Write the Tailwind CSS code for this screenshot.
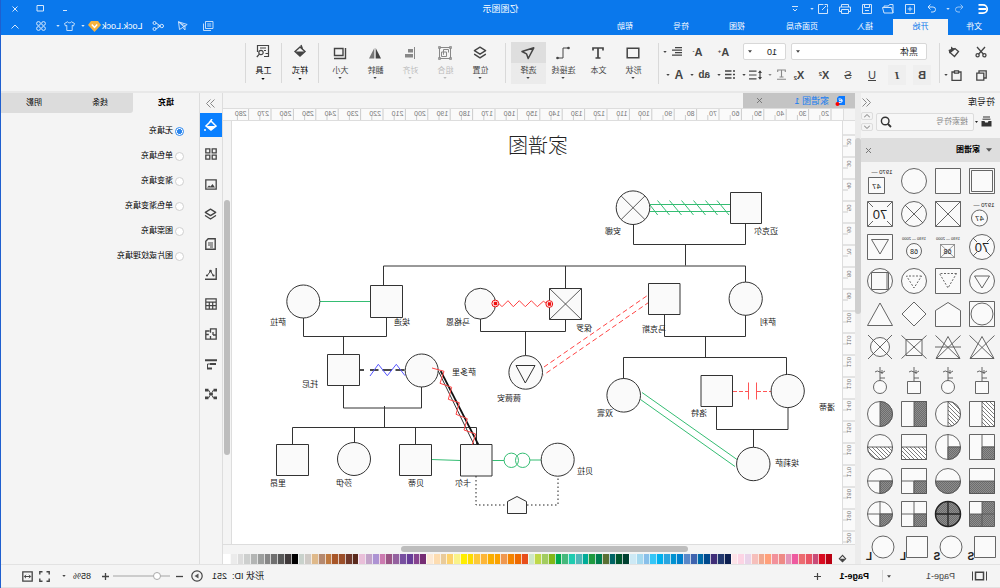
<!DOCTYPE html>
<html>
<head>
<meta charset="utf-8">
<title>亿图图示</title>
<script src="https://cdn.jsdelivr.net/npm/@tailwindcss/browser@4"></script>
</head>
<body class="bg-white">
<svg class="absolute h-0 w-0" aria-hidden="true">
  <defs>
    <symbol id="caret" viewBox="0 0 5 3"><path d="M0 0h5L2.5 3z" fill="currentColor"/></symbol>
    <symbol id="layers" viewBox="0 0 14 14"><path d="M7 1.2 12.6 4.7 7 8.2 1.4 4.7zM1.6 8.3 7 11.9l5.4-3.6" fill="none" stroke="currentColor" stroke-width="1.4" stroke-linejoin="round" stroke-linecap="round"/></symbol>
    <pattern id="dark" width="2" height="2" patternUnits="userSpaceOnUse"><rect width="2" height="2" fill="#8d8d8d"/><path d="M0 0h1v1H0zM1 1h1v1H1z" fill="#6d6d6d"/></pattern>
    <pattern id="hatch" width="4" height="4" patternUnits="userSpaceOnUse"><rect width="4" height="4" fill="#fff"/><path d="M-1 1 1-1M0 4 4 0M3 5 5 3" stroke="#444" stroke-width=".7"/></pattern>
  </defs>
</svg>

<div class="flex min-h-screen -scale-x-100 flex-col border-r border-[#1f5fcf] bg-[#f4f4f4] font-['Liberation_Sans','Noto_Sans_CJK_SC',sans-serif] text-[8px] leading-3 text-[#222]">

  <!-- title bar and menu -->
  <header class="relative flex h-[35px] bg-[#0a78ec] text-white">
    <div class="flex w-1/2 flex-col justify-between">
      <div class="flex h-[17px] items-center pl-[11px] text-[#cfe4fb]">
        <svg class="w-[12px] h-[12px] text-white" viewBox="0 0 12 12"><path d="M10.5 1.8H6A4.2 4.2 0 0 0 6 10.2h4.5M3 6h7.5" fill="none" stroke="currentColor" stroke-width="1.8"/></svg>
        <button class="ml-[12px]" aria-label="撤销"><svg class="w-[11px] h-[11px] opacity-70" viewBox="0 0 11 11"><path d="M4.5 1.5 2 4l2.500 2.500M2.200 4H7a2.400 2.400 0 0 1 0 5H5" fill="none" stroke="currentColor"/></svg></button>
        <svg class="ml-[4px] h-[2px] w-[4px]"><use href="#caret"/></svg>
        <button class="ml-[9px]" aria-label="重做"><svg class="w-[11px] h-[11px]" viewBox="0 0 11 11"><path d="M6.500 1.500 9 4 6.500 6.500M8.800 4H4a2.400 2.400 0 0 0 0 5h2" fill="none" stroke="currentColor"/></svg></button>
        <button class="ml-[11px]" aria-label="新建"><svg class="w-[10px] h-[10px]" viewBox="0 0 10 10"><path d="M.5.5h9v9h-9zM5 2.700v4.600M2.700 5h4.600" fill="none" stroke="currentColor"/></svg></button>
        <button class="ml-[11px]" aria-label="打开"><svg class="w-[12px] h-[10px]" viewBox="0 0 12 10"><path d="M1 9V.5h3.500l1 1.500h4.500v1.500M1 9l1.500-5.500h9L10 9z" fill="none" stroke="currentColor"/></svg></button>
        <button class="ml-[10px]" aria-label="保存"><svg class="w-[10px] h-[10px]" viewBox="0 0 10 10"><path d="M.5.5h9v9h-9zM2.500.5v3h5v-3M3 6.500h4" fill="none" stroke="currentColor"/></svg></button>
        <button class="ml-[11px]" aria-label="打印"><svg class="w-[12px] h-[10px]" viewBox="0 0 12 10"><path d="M2.500 3V.5h7V3M2.500 7.500h-2V3h11v4.500h-2M2.500 5.500h7v4h-7z" fill="none" stroke="currentColor"/></svg></button>
        <button class="ml-[11px]" aria-label="导出"><svg class="w-[10px] h-[10px]" viewBox="0 0 10 10"><path d="M4.500.5H9.500v9h-9V4.500M2 2l4 4M.5 3.500V.5h3" fill="none" stroke="currentColor"/></svg></button>
        <svg class="ml-[4px] h-[2px] w-[4px]"><use href="#caret"/></svg>
        <svg class="ml-[12px] w-[6px] h-[6px]" viewBox="0 0 6 6"><path d="M0 .5h6M1 3l2 2 2-2" fill="none" stroke="currentColor"/></svg>
      </div>
      <nav class="flex h-[16px]">
        <button class="w-[52px]">文件</button>
        <button class="w-[55px] bg-[#f4f4f4] text-[#0a78ec]">开始</button>
        <button class="w-[56px]">插入</button>
        <button class="w-[70px]">页面布局</button>
        <button class="w-[60px]">视图</button>
        <button class="w-[52px]">符号</button>
        <button class="w-[60px]">帮助</button>
      </nav>
    </div>
    <h1 class="absolute inset-x-0 top-[3px] text-center text-[9px]">亿图图示</h1>
    <div class="ml-auto flex flex-col items-end justify-between text-[#d6e8fc]">
      <div class="flex h-[17px] items-center gap-[18px] pr-[11px]">
        <button aria-label="最小化"><svg class="w-[6px] h-[6px]" viewBox="0 0 6 6"><path d="M1 4.500h4" stroke="currentColor"/></svg></button>
        <button aria-label="最大化"><svg class="w-[8px] h-[7px]" viewBox="0 0 8 7"><path d="M.5.5h6.500v5.500H.5z" fill="none" stroke="currentColor"/></svg></button>
        <button aria-label="关闭"><svg class="w-[6px] h-[6px]" viewBox="0 0 6 6"><path d="m.5.5 5 5m0-5-5 5" stroke="currentColor"/></svg></button>
      </div>
      <div class="flex h-[18px] items-center pr-[10px]">
        <button aria-label="评论"><svg class="w-[11px] h-[10px]" viewBox="0 0 11 10"><path d="M1 .5h7.500v7H1zM2.800 3h4M2.800 5h4M3 9.500h7.500V2.500" fill="none" stroke="currentColor" stroke-width=".9"/></svg></button>
        <button class="ml-[15px]" aria-label="发送"><svg class="w-[11px] h-[10px]" viewBox="0 0 11 10"><path d="M9.500.8.8 3.500 3 5v4l2-2.300M9.500.8 8.500 8.500 3 5zM9.500.8 4 6" fill="none" stroke="currentColor" stroke-width=".9"/></svg></button>
        <button class="ml-[13px]" aria-label="分享"><svg class="w-[12px] h-[10px]" viewBox="0 0 12 10"><path d="M3.500 5h3M3.500 5l4.500-3M3.500 5 8 8" stroke="currentColor" fill="none"/><circle cx="2.200" cy="5" r="1.700" fill="#0a78ec" stroke="currentColor"/><circle cx="9.500" cy="2" r="1.500" fill="#0a78ec" stroke="currentColor"/><circle cx="9.500" cy="8" r="1.500" fill="#0a78ec" stroke="currentColor"/></svg></button>
        <button class="ml-[9px] flex items-center text-[9px] text-white">Lock.Lock<svg class="ml-px w-[13px] h-[11px]" viewBox="0 0 13 11"><path d="M3 0h7l3 4-6.500 7L0 4z" fill="#f6b340"/><path d="M3.800 3.500 6.500 6.500 9.200 3.500" fill="none" stroke="#fff" stroke-width="1.500"/></svg></button>
        <svg class="ml-[3px] h-[2px] w-[4px]"><use href="#caret"/></svg>
        <button class="ml-[6px]" aria-label="皮肤"><svg class="w-[11px] h-[10px]" viewBox="0 0 11 10"><path d="M3.500.8.5 2.500l1 2.500 1.300-.6V9.500h5.400V4.400l1.300.6 1-2.500L7.500.8c-.8 1.300-3.200 1.300-4 0z" fill="none" stroke="currentColor" stroke-width=".9"/></svg></button>
        <svg class="ml-[4px] h-[2px] w-[4px]"><use href="#caret"/></svg>
        <button class="ml-[10px]" aria-label="应用"><svg class="w-[10px] h-[10px]" viewBox="0 0 10 10" fill="none" stroke="currentColor"><circle cx="2.500" cy="2.500" r="1.900"/><circle cx="7.500" cy="2.500" r="1.900"/><circle cx="2.500" cy="7.500" r="1.900"/><circle cx="7.500" cy="7.500" r="1.900"/></svg></button>
        <button class="ml-[17px]" aria-label="收起"><svg class="w-[8px] h-[5px]" viewBox="0 0 8 5"><path d="M.5 4.500 4 1l3.500 3.500" fill="none" stroke="currentColor"/></svg></button>
      </div>
    </div>
  </header>

  <!-- ribbon -->
  <div class="flex h-[58px] items-center border-b-2 border-[#e8e8e8] text-[#444]">
    <div class="grid h-[40px] w-[61px] grid-cols-2 content-center items-center justify-items-center gap-y-[12px] border-r border-[#d9d9d9] pl-[5px]">
      <button aria-label="剪切"><svg class="w-[12px] h-[12px]" viewBox="0 0 12 12" fill="none" stroke="currentColor" stroke-width="1.300"><path d="M2 1l6.500 7.200M10 1 3.500 8.200"/><circle cx="2.600" cy="9.300" r="1.600"/><circle cx="9.400" cy="9.300" r="1.600"/></svg></button>
      <button aria-label="格式刷"><svg class="w-[12px] h-[12px]" viewBox="0 0 12 12"><path d="M1.500 5.500 5 2.500 10 6.500 5.500 10.500z" fill="none" stroke="currentColor" stroke-width="1.300"/><path d="m4.500 2.500 6 5L11.500 4 9 3V.5L7 2z" fill="currentColor"/></svg></button>
      <button aria-label="复制"><svg class="w-[11px] h-[11px]" viewBox="0 0 11 11" fill="none" stroke="currentColor" stroke-width="1.300"><path d="M8 3V.800H.8V8H3M3.200 3.200h7v7h-7z"/></svg></button>
      <button class="flex items-center gap-[3px] pl-px" aria-label="粘贴"><svg class="w-[11px] h-[11px]" viewBox="0 0 11 11" fill="none" stroke="currentColor" stroke-width="1.300"><path d="M3.500 2H1v8.300h9V2H7.500M3.500.8h4v2.400h-4z"/></svg><svg class="h-[2px] w-[4px]"><use href="#caret"/></svg></button>
    </div>
    <div class="flex w-[281px] flex-col gap-[5px] border-r border-[#d9d9d9] pl-[12px]">
      <div class="flex h-[18px] items-center">
        <div class="relative w-[136px]">
          <select aria-label="字体" class="h-[17px] w-full appearance-none rounded-[2px] border border-[#d8d8d8] bg-white pl-[8px] text-[9px] text-[#222]"><option>黑体</option></select>
          <svg class="absolute top-[7px] right-[5px] h-[3px] w-[4px]"><use href="#caret"/></svg>
        </div>
        <div class="relative ml-[5px] w-[43px]">
          <select aria-label="字号" class="h-[17px] w-full appearance-none rounded-[2px] border border-[#d8d8d8] bg-white pl-[8px] text-[9px] text-[#222]"><option>10</option></select>
          <svg class="absolute top-[7px] right-[5px] h-[3px] w-[4px]"><use href="#caret"/></svg>
        </div>
        <button class="ml-[13px] w-[13px] text-[11px] font-bold">A<sup class="text-[6px]">+</sup></button>
        <button class="ml-[13px] w-[13px] text-[11px] font-bold">A<sup class="text-[6px]">-</sup></button>
        <button class="ml-[9px] flex items-center gap-[5px]" aria-label="对齐"><svg class="w-[10px] h-[9px]" viewBox="0 0 10 9"><path d="M0 .7h7M0 3.200h10M0 5.700h7M0 8.200h10" stroke="currentColor" stroke-width="1.300"/></svg><svg class="h-[2px] w-[4px]"><use href="#caret"/></svg></button>
      </div>
      <div class="flex h-[18px] items-center text-[11px]">
        <button class="w-[18px] bg-[#efefef] py-1 font-bold -ml-[4px]">B</button>
        <button class="ml-[7px] w-[18px] bg-[#efefef] py-1 font-['Liberation_Serif'] font-bold italic">I</button>
        <button class="ml-[7px] w-[18px] underline">U</button>
        <button class="ml-[6px] w-[18px] line-through">S</button>
        <button class="ml-[6px] w-[18px] font-bold">X<sup class="text-[6px]">2</sup></button>
        <button class="ml-[7px] w-[18px] font-bold">X<sub class="text-[6px]">2</sub></button>
        <button class="ml-[4px] flex items-center gap-[5px] text-[#888]" aria-label="清除格式"><svg class="w-[9px] h-[11px]" viewBox="0 0 9 11"><path d="M.7 3V1h7.600v2M4.500 1v7M2.500 8h4M0 10.300h9" fill="none" stroke="currentColor" stroke-width="1.100"/></svg><svg class="h-[2px] w-[4px]"><use href="#caret"/></svg></button>
        <button class="ml-[6px] flex items-center gap-[3px]" aria-label="行距"><svg class="w-[13px] h-[10px]" viewBox="0 0 13 10"><path d="M5.500 1.200H13M5.500 5H13M5.500 8.800H13M2 1v8" stroke="currentColor" stroke-width="1.200"/><path d="M0 3 2 .3 4 3zM0 7l2 2.700L4 7z" fill="currentColor"/></svg><svg class="h-[2px] w-[4px]"><use href="#caret"/></svg></button>
        <button class="ml-[7px] flex items-center gap-[4px]" aria-label="项目符号"><svg class="w-[10px] h-[9px]" viewBox="0 0 10 9"><path d="M0 1h2M3.500 1H10M0 4.500h2M3.500 4.500H10M0 8h2M3.500 8H10" stroke="currentColor" stroke-width="1.300"/></svg><svg class="h-[2px] w-[4px]"><use href="#caret"/></svg></button>
        <button class="ml-[7px] flex items-center gap-[4px] text-[10px] font-bold">ab<svg class="h-[2px] w-[4px]"><use href="#caret"/></svg></button>
        <button class="ml-[7px] flex items-center gap-[5px] text-[12px] font-bold">A<svg class="h-[2px] w-[4px]"><use href="#caret"/></svg></button>
      </div>
    </div>

    <div class="flex h-[40px] w-[153px] items-center border-r border-[#d9d9d9] pl-[7px]">
      <button class="flex h-[42px] w-[35px] flex-col items-center leading-[10px]"><svg class="mt-[4px] h-[14px] w-[14px]" viewBox="0 0 14 14"><path d="M1.200 2.200h11.600v9.600H1.200z" fill="none" stroke="currentColor" stroke-width="1.500"/></svg><span class="mt-[6px]">形状</span><svg class="mt-px h-[2px] w-[4px]"><use href="#caret"/></svg></button>
      <button class="flex h-[42px] w-[35px] flex-col items-center leading-[10px]"><svg class="mt-[4px] h-[14px] w-[14px]" viewBox="0 0 14 14"><path d="M2 4.500V2h10v2.500M7 2v10M4.500 12h5" fill="none" stroke="currentColor" stroke-width="1.700"/></svg><span class="mt-[6px]">文本</span></button>
      <button class="flex h-[42px] w-[35px] flex-col items-center leading-[10px]"><svg class="mt-[4px] h-[14px] w-[14px]" viewBox="0 0 14 14"><path d="M1.500 2h5.500v10h5.500" fill="none" stroke="currentColor"/><circle cx="1.500" cy="2" r="1.300" fill="currentColor"/><circle cx="12.500" cy="12" r="1.300" fill="currentColor"/></svg><span class="mt-[6px]">连接线</span><svg class="mt-px h-[2px] w-[4px]"><use href="#caret"/></svg></button>
      <button class="flex h-[42px] w-[35px] flex-col items-center bg-linear-to-b from-[#dedede] from-50% to-[#ebebeb] to-50% leading-[10px]"><svg class="mt-[4px] h-[14px] w-[14px]" viewBox="0 0 14 14"><path d="M1.200 1.800 13 5.500 8.500 7.800 6.800 12.500z" fill="none" stroke="currentColor" stroke-width="1.500" stroke-linejoin="round"/></svg><span class="mt-[6px]">选择</span><svg class="mt-px h-[2px] w-[4px]"><use href="#caret"/></svg></button>
    </div>
    <div class="flex h-[40px] w-[187px] items-center border-r border-[#d9d9d9] pl-[7px]">
      <button class="flex h-[42px] w-[35px] flex-col items-center leading-[10px]"><svg class="mt-[4px] h-[14px] w-[14px]"><use href="#layers"/></svg><span class="mt-[6px]">位置</span><svg class="mt-px h-[2px] w-[4px]"><use href="#caret"/></svg></button>
      <button class="flex h-[42px] w-[35px] flex-col items-center leading-[10px] text-[#bbb]"><svg class="mt-[4px] h-[14px] w-[14px] text-[#888]" viewBox="0 0 14 14" fill="none" stroke="currentColor"><path d="M1.500 1.500h11v11h-11zM3.500 6.500v-3h5v5H8M5.500 6h5v4.500h-5z"/><path d="M.5.500h2v2h-2zM11.500.5h2v2h-2zM.5 11.500h2v2h-2zM11.500 11.500h2v2h-2z" stroke-width=".8"/></svg><span class="mt-[6px]">组合</span><svg class="mt-px h-[2px] w-[4px]"><use href="#caret"/></svg></button>
      <button class="flex h-[42px] w-[35px] flex-col items-center leading-[10px] text-[#bbb]"><svg class="mt-[4px] h-[14px] w-[14px] text-[#888]" viewBox="0 0 14 14" fill="currentColor"><path d="M2 1h1v12H2zM4 3h5v3.500H4zM4 8h8v3.500H4z"/></svg><span class="mt-[6px]">对齐</span><svg class="mt-px h-[2px] w-[4px]"><use href="#caret"/></svg></button>
      <button class="flex h-[42px] w-[35px] flex-col items-center leading-[10px]"><svg class="mt-[4px] h-[14px] w-[14px]" viewBox="0 0 14 14"><path d="M6.300 2v10.500H1z" fill="currentColor"/><path d="M7.700 2v10.500H13z" fill="#777"/></svg><span class="mt-[6px]">翻转</span><svg class="mt-px h-[2px] w-[4px]"><use href="#caret"/></svg></button>
      <button class="flex h-[42px] w-[35px] flex-col items-center leading-[10px]"><svg class="mt-[4px] h-[14px] w-[14px]" viewBox="0 0 14 14" fill="none" stroke="currentColor" stroke-width="1.400"><path d="M4 2.500h8.500v7H4zM1.500 2v10.500H13"/></svg><span class="mt-[6px]">大小</span><svg class="mt-px h-[2px] w-[4px]"><use href="#caret"/></svg></button>
    </div>
    <div class="flex h-[40px] w-[37px] items-center justify-center border-r border-[#d9d9d9]">
      <button class="flex h-[42px] w-[35px] flex-col items-center leading-[10px] text-black"><svg class="mt-[2px] h-[14px] w-[14px]" viewBox="0 0 14 14"><path d="M6 1 4.500 5M7 3l5 4.500-5 4.500-5-4.500z" fill="none" stroke="#444" stroke-width="1.400"/><path d="M2.500 7.500h9L7 12z" fill="#444"/></svg><span class="mt-[8px]">样式</span><svg class="mt-[2px] h-[2px] w-[4px]"><use href="#caret"/></svg></button>
    </div>
    <div class="flex h-[40px] w-[36px] items-center justify-center border-r border-[#d9d9d9]">
      <button class="flex h-[42px] w-[35px] flex-col items-center leading-[10px] text-black"><svg class="mt-[2px] h-[14px] w-[14px] text-[#444]" viewBox="0 0 14 14" fill="none" stroke="currentColor" stroke-width="1.200"><path d="M6 12.500H1.500v-11h11V8M4 4h6M4 6.500h2M1.500 9.500h3"/><circle cx="9" cy="8.500" r="2.200"/><path d="m10.600 10.200 2.600 2.800"/></svg><span class="mt-[8px]">工具</span><svg class="mt-[2px] h-[2px] w-[4px]"><use href="#caret"/></svg></button>
    </div>
  </div>

  <main class="flex flex-1">
    <!-- symbol library -->
    <aside class="flex w-[139px] flex-col">
      <div class="flex h-[18px] items-center justify-between pr-px pl-[5px] text-[9px]"><h2>符号库</h2><button aria-label="收起符号库"><svg class="h-[9px] w-[9px] text-[#888]" viewBox="0 0 9 9"><path d="M4.500.5.500 4.500l4 4M8.500.5l-4 4 4 4" fill="none" stroke="currentColor"/></svg></button></div>
      <div class="mb-[6px] flex h-[21px] items-center pl-[8px]">
        <button class="flex items-center gap-[3px]" aria-label="符号分类"><svg class="h-[11px] w-[11px] text-[#333]" viewBox="0 0 11 11"><path d="M2 1h7M1.500 3.200h8" stroke="currentColor"/><path d="M.5 5h3l.7 1.500h2.600L7.500 5h3v5.500H.5z" fill="currentColor"/></svg><svg class="h-[2px] w-[3px]"><use href="#caret"/></svg></button>
        <div class="relative ml-px">
          <input aria-label="搜索符号" placeholder="搜索符号" class="h-[18px] w-[98px] rounded-[2px] border border-[#dcdcdc] bg-[#f7f7f7] pl-[5px] text-[8px] placeholder:text-[#888]">
          <svg class="absolute top-[3px] right-[4px] h-[12px] w-[12px] text-[#333]" viewBox="0 0 12 12"><path d="m4 8-3 3" stroke="currentColor" stroke-width="1.800"/><circle cx="6.800" cy="5" r="3.800" fill="none" stroke="currentColor" stroke-width="1.400"/></svg>
        </div>
        <div class="ml-[3px] flex flex-col gap-[3px]">
          <button class="flex h-[8px] w-[12px] items-center justify-center rounded-[2px] border border-[#ddd]" aria-label="上"><svg class="h-[4px] w-[6px]" viewBox="0 0 6 4"><path d="m0 3.500 3-3 3 3" fill="none" stroke="#777"/></svg></button>
          <button class="flex h-[8px] w-[12px] items-center justify-center rounded-[2px] border border-[#ddd]" aria-label="下"><svg class="h-[4px] w-[6px]" viewBox="0 0 6 4"><path d="m0 .5 3 3 3-3" fill="none" stroke="#777"/></svg></button>
        </div>
      </div>
      <div class="flex h-[24px] items-center bg-[#dedede] pr-[5px] pl-[8px] text-[8px] font-bold text-black"><svg class="mr-[6px] h-[4px] w-[6px] text-[#555]"><use href="#caret"/></svg>家谱图<button class="ml-auto" aria-label="关闭家谱图"><svg class="h-[5px] w-[5px]" viewBox="0 0 5 5"><path d="m0 0 5 5m0-5-5 5" stroke="#777"/></svg></button></div>
      <div id="library" class="grid flex-1 grid-cols-4 items-center justify-items-center pt-[2px] pr-[2px] pl-px"></div>
    </aside>
    <div class="w-[6px] bg-[#ececec] pt-[45px]"><div class="h-[176px] rounded-full bg-[#cfcfcf]"></div></div>

    <!-- drawing area -->
    <section class="flex min-w-0 flex-1 flex-col">
      <div class="flex h-[15px]"><button class="flex w-[112px] items-center bg-[#c4c4c4] pl-[9px] text-[9px] text-[#1a7df0]"><svg class="mr-[6px] h-[10px] w-[11px]" viewBox="0 0 11 10"><path d="M1 0h6l2 2v7H1z" fill="#0a78ff"/><path d="M7.500 3H5.500a1.700 1.700 0 0 0 0 3.500h2M4 4.700h3" stroke="#fff" fill="none"/><circle cx="8.500" cy="8" r="2" fill="#f00"/></svg>家谱图 1<svg class="ml-auto mr-[14px] h-[5px] w-[5px]" viewBox="0 0 5 5"><path d="m0 0 5 5m0-5-5 5" stroke="#666" stroke-width=".8"/></svg></button></div>
      <div class="flex h-[13px] border-t border-b border-[#ddd]"><div class="w-[12px] border-r border-[#ddd]"></div><div class="min-w-0 flex-1 overflow-hidden bg-[#fafafa]"><svg id="hruler" class="h-[11px] w-[616px]"></svg></div></div>
      <div class="flex min-h-0 flex-1">
        <div class="w-[13px] overflow-hidden border-r border-[#ddd] bg-[#fafafa]"><svg id="vruler" class="h-[423px] w-[12px]"></svg></div>
        <div class="min-w-0 flex-1 overflow-hidden bg-white">
          <svg class="h-[422px] w-[610px]" viewBox="158 121 610 422" fill="none" stroke="#333" stroke-width="1">
            <g transform="matrix(-1 0 0 1 1000 0)">
              <path d="M633.500 224v20.500h112V224M685.500 244.500v21M383.500 285v-19h362v17M565.500 266v22M664.500 315v21.500h81V315M705.500 336.500v21M623.500 379v-21.500h163V375M716.500 407v22.500h71.500V407M753.500 429.500V447M480.500 319v12.500h85V320M525.500 331.500V356M303.500 318v18.500h83V317M343.500 336.500V355M343.500 386v22h78v-21M384.500 406v21.500M292.500 445v-17.500h184V445M354.500 427.500V443M415.500 427.500V445"/>
              <path d="M650 204.500h80M650 211.500h80M650 205l7.700 10M657.500 200.500l12 14.500M669.500 200.500l12 14.500M681.500 200.500l12 14.500M693.500 200.500l12 14.500M705.500 200.500l12 14.500M717 200.500l12 14.500M642 392.500l95 67M640.500 399.500l94.500 67M320 301.500h50M431.500 459.500l29 1M492.500 460.500H504M530 460h11" stroke="#35bd73"/>
              <g stroke="#35bd73"><circle cx="511.300" cy="460.300" r="7.200"/><circle cx="522.700" cy="460.300" r="7.200"/></g>
              <path d="M646.700 296 544 367M649.300 302 543.500 375" stroke="#f44" stroke-dasharray="5 3"/>
              <path d="M733 391.500h15M757 391.500h15" stroke="#f55" stroke-dasharray="4 2"/>
              <path d="M748.500 382.500v17M756.500 382.500v17" stroke="#f55"/>
              <g fill="#fafafa">
                <path d="M730.500 192.500h31v31h-31zM648.500 283.500h31.500v31h-31.500zM701 375.500h31.500v31H701zM549.500 288.500h32v31h-32zM370.500 285.500h32v32h-32zM327.500 354.500h32v31h-32zM276.500 444.500h32v31h-32zM399.500 444.500h32v31h-32zM460.500 444.500h31.500v31.500h-31.500zM507.500 501.500l9.500-5 9.500 5v12h-19z"/>
                <circle cx="633" cy="207.700" r="16.800"/><circle cx="745.700" cy="298.700" r="16.600"/><circle cx="623.700" cy="395.300" r="16.800"/><circle cx="787.700" cy="391" r="16.600"/><circle cx="753.300" cy="464" r="16.700"/><circle cx="480.300" cy="303.700" r="15.400"/><circle cx="525.700" cy="372.400" r="16.800"/><circle cx="303.300" cy="301.500" r="16.500"/><circle cx="421.700" cy="370.500" r="16.500"/><circle cx="354" cy="459" r="16.500"/><circle cx="557.700" cy="459.700" r="16.500"/>
                <path d="M516 365.500h19l-9.700 17.500z"/>
              </g>
              <path d="m621.200 196 23.700 23.500m0-23.500-23.700 23.500M549.500 288.500l32 31m0-31-32 31" stroke-width=".8"/>
              <path d="m498.700 303.300 3.300 3.400 6-6 5.300 6 6-6 6 6 6-6 6 6 6-5.400 3.300 2" stroke="#f44"/>
              <g stroke="#e11"><circle cx="495.300" cy="303.500" r="3.400" fill="#fff"/><circle cx="549.300" cy="304" r="3.400" fill="#fff"/></g>
              <path d="M494 302h3v3h-3zM548 302.500h3v3h-3z" fill="#e11" stroke="#e11" stroke-width=".5"/>
              <path d="M360 370h4M370 370h8.500M382.500 370h9.500M395.500 370h9" stroke="#111" stroke-width="1.400"/>
              <path d="m370 376 8.300-11.700 9 11.400 9-11.400 8.700 11.400" stroke="#55f"/>
              <path d="m438.300 371 35.700 73.500"/>
              <path d="m440.700 371 37.600 73.500" stroke="#111" stroke-width="1.700"/>
              <path d="m432 368 12 3.300-4 12 11.700 4-3.400 12 11 3.400-3.300 11.600 11.300 4.400L464 430l11.700 4-3.400 10.500" stroke="#f44"/>
              <path d="M476 476v29h31M527 505h31v-29" stroke="#222" stroke-dasharray="1.500 2.500"/>
            </g>
            <g fill="#222" stroke="none" text-anchor="middle" class="text-[8px]">
              <text x="234" y="234">迈克尔</text><text x="387" y="234">安娜</text><text x="232" y="325">萨利</text><text x="346" y="332">马克斯</text><text x="173" y="410">潘蒂</text><text x="301" y="416">洛特</text><text x="395" y="416">双寰</text><text x="213" y="466">埃莉萨</text><text x="416" y="331">保罗</text><text x="542" y="325">马格恩</text><text x="598" y="325">埃迪</text><text x="722" y="325">萨拉</text><text x="690" y="387">托尼</text><text x="536" y="375">萨多里</text><text x="491" y="401">薇薇安</text><text x="722" y="486">里昂</text><text x="656" y="486">莎伊</text><text x="584" y="486">贝蒂</text><text x="537" y="486">卡尔</text><text x="415" y="474">贝拉</text>
              <text x="462" y="153" class="text-[20px] font-light">家谱图</text>
            </g>
          </svg>
        </div>
        <div class="w-[9px] border-l border-[#ddd] pt-[79px]"><div class="ml-px h-[255px] w-[6px] rounded-full bg-[#bdbdbd]"></div></div>
      </div>
      <div class="flex h-[9px] items-center border-t border-[#ddd] pl-[167px]"><div class="h-[6px] w-[287px] rounded-full bg-[#bdbdbd]"></div></div>
      <div class="flex h-[11px] items-center pl-[8px]"><svg class="mr-[6px] h-[9px] w-[9px]" viewBox="0 0 14 14"><path d="M7 2l5 5.500-5 4.500-5-4.500z" fill="none" stroke="#444" stroke-width="1.600"/><path d="M2.500 7.500h9L7 12z" fill="#444"/></svg><div id="palette" class="flex h-[10px] flex-1"></div></div>
    </section>

    <!-- panel switcher -->
    <nav class="flex w-[24px] flex-col items-center border-x border-[#ddd] text-[#444]">
      <button class="flex h-[20px] items-center" aria-label="收起面板"><svg class="h-[9px] w-[9px] text-[#888]" viewBox="0 0 9 9"><path d="m.5.500 4 4-4 4M4.500.5l4 4-4 4" fill="none" stroke="currentColor"/></svg></button>
      <button class="flex h-[24px] w-full items-center justify-center bg-[#0a80ff] text-white" aria-label="填充"><svg class="h-[13px] w-[13px]" viewBox="0 0 13 13"><path d="m6 2 5 5-5 4-5-4z M5 0l3 4" fill="none" stroke="currentColor" stroke-width="1.500"/><path d="M1.500 7h9L6 11z" fill="currentColor"/><circle cx="12" cy="11" r="1" fill="currentColor"/></svg></button>
      <button class="mt-[2px] flex h-[30px] items-center" aria-label="主题"><svg class="h-[12px] w-[12px]" viewBox="0 0 12 12" fill="none" stroke="currentColor" stroke-width="1.300"><path d="M.8.8h4v4h-4zM7.200.8h4v4h-4zM.8 7.200h4v4h-4zM7.200 7.200h4v4h-4z"/></svg></button>
      <button class="flex h-[30px] items-center" aria-label="图片"><svg class="h-[11px] w-[12px]" viewBox="0 0 12 11"><path d="M.8.8h10.400v9.400H.8z" fill="none" stroke="currentColor" stroke-width="1.300"/><path d="M2 8.500 4.500 5l2 2.500 1.500-1 2 2z" fill="currentColor"/></svg></button>
      <button class="flex h-[30px] items-center" aria-label="图层"><svg class="h-[13px] w-[13px]"><use href="#layers"/></svg></button>
      <button class="flex h-[30px] items-center" aria-label="页面"><svg class="h-[12px] w-[11px]" viewBox="0 0 11 12"><path d="M.8.800h7l2.400 2.400v8H.8z" fill="none" stroke="currentColor" stroke-width="1.400"/><path d="M3 5h5M3 7h5M3 9h3" stroke="currentColor"/></svg></button>
      <button class="flex h-[30px] items-center" aria-label="图表"><svg class="h-[12px] w-[12px]" viewBox="0 0 12 12"><path d="M.8 0v11.200H12" fill="none" stroke="currentColor" stroke-width="1.400"/><path d="m3.500 8 3-5L10 8" fill="none" stroke="currentColor"/><circle cx="6.500" cy="3" r="1.300" fill="currentColor"/><circle cx="3.500" cy="7.500" r="1.100" fill="currentColor"/><circle cx="10" cy="7.500" r="1.100" fill="currentColor"/></svg></button>
      <button class="flex h-[30px] items-center" aria-label="表格"><svg class="h-[12px] w-[12px]" viewBox="0 0 12 12"><path d="M.8.8h10.400v10.400H.8zM.8 4.200h10.400M.8 7.700h10.400M4.300 4v7M7.700 4v7" fill="none" stroke="currentColor" stroke-width="1.200"/></svg></button>
      <button class="flex h-[30px] items-center" aria-label="平面图"><svg class="h-[12px] w-[12px]" viewBox="0 0 12 12"><path d="M7.500 3h3.700v8.200H.8V.8h5.700v4M11.200 6.500h-3M4 4v3M4 7H1M6.500 8v3" fill="none" stroke="currentColor" stroke-width="1.300"/></svg></button>
      <button class="flex h-[30px] items-center" aria-label="甘特图"><svg class="h-[11px] w-[12px]" viewBox="0 0 12 11"><path d="M0 1.200h12M1 5h6M5 9.500h5" stroke="currentColor" stroke-width="1.900"/><path d="M9.500 9V5H7" fill="none" stroke="currentColor"/></svg></button>
      <button class="flex h-[30px] items-center" aria-label="思维导图"><svg class="h-[12px] w-[12px]" viewBox="0 0 12 12"><path d="M3.500 2 5 4.500v3L3.500 10M8.500 2 7 4.500v3L8.500 10M4 6h4" fill="none" stroke="currentColor"/><path d="M0 .8h3.500v2.600H0zM8.500.8H12v2.600H8.500zM0 8.600h3.500v2.600H0zM8.500 8.600H12v2.600H8.500zM4.500 4.700h3v2.600h-3z" fill="currentColor"/></svg></button>
    </nav>

    <!-- fill panel -->
    <aside class="w-[198px] text-black">
      <div class="flex h-[20px]"><button class="w-[66px] font-bold">填充</button><button class="flex-1 rounded-bl-[3px] bg-[#dcdcdc]">线条</button><button class="flex-1 bg-[#dcdcdc]">阴影</button></div>
      <fieldset class="flex flex-col gap-[13px] pt-[12px] pl-[15px]">
        <label class="flex items-center gap-[2px]"><input type="radio" name="fill" checked class="h-[9px] w-[9px] appearance-none rounded-full border border-[#2a86ee] bg-white bg-radial from-[#2a86ee] from-45% to-white to-50%">无填充</label>
        <label class="flex items-center gap-[2px]"><input type="radio" name="fill" class="h-[9px] w-[9px] appearance-none rounded-full border border-[#d0d0d0] bg-white">单色填充</label>
        <label class="flex items-center gap-[2px]"><input type="radio" name="fill" class="h-[9px] w-[9px] appearance-none rounded-full border border-[#d0d0d0] bg-white">渐变填充</label>
        <label class="flex items-center gap-[2px]"><input type="radio" name="fill" class="h-[9px] w-[9px] appearance-none rounded-full border border-[#d0d0d0] bg-white">单色渐变填充</label>
        <label class="flex items-center gap-[2px]"><input type="radio" name="fill" class="h-[9px] w-[9px] appearance-none rounded-full border border-[#d0d0d0] bg-white">图案填充</label>
        <label class="flex items-center gap-[2px]"><input type="radio" name="fill" class="h-[9px] w-[9px] appearance-none rounded-full border border-[#d0d0d0] bg-white">图片或纹理填充</label>
      </fieldset>
    </aside>
  </main>

  <!-- status bar -->
  <footer class="flex h-[25px] items-center border-t border-b-2 border-[#e2e2e2] text-[9px]">
    <button class="ml-[13px]" aria-label="页面视图"><svg class="h-[10px] w-[15px]" viewBox="0 0 15 10" fill="none" stroke="#444"><path d="M.5.500v9M14.500.5v9"/><path d="M3.500 1.200h8v7.600h-8z" stroke-width="1.500"/></svg></button>
    <button class="ml-[17px] flex w-[73px] items-center justify-between border-r border-[#d5d5d5] pr-[4px] text-[#444]">Page-1<svg class="h-[3px] w-[4px]"><use href="#caret"/></svg></button>
    <button class="ml-[13px] font-bold text-black">Page-1</button>
    <button class="ml-[18px]" aria-label="添加页面"><svg class="h-[7px] w-[7px]" viewBox="0 0 7 7"><path d="M3.500 0v7M0 3.500h7" stroke="#444" stroke-width="1.200"/></svg></button>
    <span class="ml-auto">形状 ID:&nbsp; 251</span>
    <button class="ml-[9px]" aria-label="播放"><svg class="h-[12px] w-[12px]" viewBox="0 0 12 12"><circle cx="6" cy="6" r="5.200" fill="none" stroke="#444" stroke-width="1.200"/><path d="M4.500 3.500 8.500 6l-4 2.500z" fill="#555"/></svg></button>
    <button class="ml-[8px]" aria-label="缩小"><svg class="h-[7px] w-[7px]" viewBox="0 0 7 7"><path d="M0 3.500h7" stroke="#444" stroke-width="1.300"/></svg></button>
    <input type="range" aria-label="缩放" value="18" class="ml-[6px] h-[9px] w-[57px] appearance-none bg-transparent [&::-webkit-slider-runnable-track]:h-[2px] [&::-webkit-slider-runnable-track]:bg-[#cccccc] [&::-webkit-slider-thumb]:-mt-[3px] [&::-webkit-slider-thumb]:h-[8px] [&::-webkit-slider-thumb]:w-[8px] [&::-webkit-slider-thumb]:appearance-none [&::-webkit-slider-thumb]:rounded-full [&::-webkit-slider-thumb]:border [&::-webkit-slider-thumb]:border-[#aaa] [&::-webkit-slider-thumb]:bg-white">
    <button class="ml-[4px]" aria-label="放大"><svg class="h-[7px] w-[7px]" viewBox="0 0 7 7"><path d="M3.500 0v7M0 3.500h7" stroke="#444" stroke-width="1.300"/></svg></button>
    <button class="ml-[11px] flex items-center gap-[7px]">85%<svg class="h-[2px] w-[4px] text-[#444]"><use href="#caret"/></svg></button>
    <button class="ml-[12px]" aria-label="全屏"><svg class="h-[11px] w-[11px]" viewBox="0 0 11 11"><path d="M.8 3.500V.8h2.700M7.500.8h2.700v2.700M10.200 7.500v2.700H7.500M3.500 10.200H.8V7.500" fill="none" stroke="#444" stroke-width="1.400"/></svg></button>
    <button class="mr-[21px] ml-[6px]" aria-label="适应窗口"><svg class="h-[11px] w-[11px]" viewBox="0 0 11 11"><path d="M.8.800h9.400v9.400H.8z" fill="none" stroke="#444" stroke-width="1.300"/><path d="M2.500 5.500h6M4 3.800 2.300 5.500 4 7.200M7 3.800l1.700 1.700L7 7.200" fill="none" stroke="#444"/></svg></button>
  </footer>
</div>

<script>
// Symbol library: each entry is the content of a 28x28 drawing.
const sq = '<path d="M1.500 1.500h25v25h-25z"/>';
const ci = '<circle cx="14" cy="14" r="12.500"/>';
const tri = '<path d="M5.500 6.500h17L14 21z"/>', triS = '<path d="M6.500 9h15L14 21z"/>';
const dash = s => `<g stroke-dasharray="2 1.500">${s}</g>`;
const t = (s, x, y, size) => `<text x="${x}" y="${y}" font-size="${size}" text-anchor="middle" fill="#222" stroke="none">${s}</text>`;
const plant = x => `<path d="M14 0v14M9 4q3 3 5 1q3-2 5 0M12 3v4M14 11l-3 0M9 11h2"/>` + x;
const half = 'M14 1.500v25', mid = 'M1.500 14h25';
const quarterC = '<path d="M14 14v12.500A12.500 12.500 0 0 1 1.500 14z" fill="url(#dark)"/>';
const quarterS = '<path d="M14 14v12.500H1.500V14z" fill="url(#dark)"/>';
const corners = '<path d="M2 2l5 5M26 2l-5 5M2 26l5-5M26 26l-5-5"/>';
const cornersC = '<path d="M5 5l4 4M23 5l-4 4M5 23l4-4M23 23l-4-4"/>';
const items = [
  sq + '<path d="M3.500 3.500h21v21h-21z"/>', sq, ci, t('1970 —', 12, 7, 6) + '<path d="M9.500 10.500h16v16h-16z"/>' + t('47', 17.5, 22, 8),
  t('1970 —', 12, 7, 6) + '<circle cx="16.500" cy="18" r="8"/>' + t('47', 16.5, 21, 8), sq + '<path d="m1.500 1.500 25 25m0-25-25 25"/>', ci + '<path d="m5 5 18 18m0-18L5 23"/>', sq + corners + t('70', 14, 19, 13),
  ci + cornersC + t('70', 14, 19, 13), t('1930 — 2000', 14, 7, 4) + '<path d="M7.500 11.500h14v13h-14zl14 13m0-13-14 13" stroke-width=".6"/>' + t('68', 14.5, 21, 7), t('1930 — 2000', 14, 7, 4) + '<circle cx="14" cy="18" r="7.500"/>' + t('68', 14, 21, 7), sq + tri,
  ci + triS, sq + dash(tri), ci + dash(triS), ci + '<path d="M5.500 5.500h17v17h-17zM7 5.500v17"/>',
  sq + '<circle cx="14" cy="14" r="11"/>', '<path d="M1.500 10.500 14 2.500l12.500 8v16h-25z"/>', '<path d="M14 2 26 14 14 26 2 14z"/>', '<path d="M14 3 26.500 25.500h-25z"/>',
  '<path d="M14 3.500 26 25.500H2zM1.500 2.500l24 23m1-23-24 23"/>', '<path d="M14 3.500 26 25.500H2zM1.500 2.500l24 23m1-23-24 23M1 14h26"/>', '<path d="M6 6.500h16v16H6zM1.500 2.500l25 23m0-23-25 23"/>', '<circle cx="14" cy="14" r="9.500"/><path d="m2 2 24 24m0-24L2 26"/>',
  plant('<path d="M7.500 14.500h13v12h-13z"/>'), plant('<circle cx="14" cy="20" r="6.500"/>'), plant('<path d="M7.500 14.500h13v12h-13z"/>'), plant('<circle cx="14" cy="20" r="6.500"/>'),
  sq + '<path d="M1.500 1.500H14v25H1.500z" fill="url(#hatch)"/>', ci + '<path d="M14 1.500v25a12.500 12.500 0 0 1 0-25z" fill="url(#hatch)"/>', sq + '<path d="M1.500 1.500H14v25H1.500z" fill="url(#dark)"/>', ci + '<path d="M14 1.500v25a12.500 12.500 0 0 1 0-25z" fill="url(#dark)"/>',
  sq + `<path d="${half}M1.500 14H14"/>` + quarterS, ci + `<path d="${half}M1.500 14H14"/>` + quarterC, sq + '<path d="M1.500 14h25v12.500h-25z" fill="url(#hatch)"/>', ci + '<path d="M1.500 14h25a12.500 12.500 0 0 1-25 0z" fill="url(#hatch)"/>',
  sq + '<path d="M1.500 14h25v12.500h-25z" fill="url(#dark)"/>', ci + '<path d="M1.500 14h25a12.500 12.500 0 0 1-25 0z" fill="url(#dark)"/>', sq + `<path d="${mid}M14 14v12.500"/>` + quarterS, ci + `<path d="${mid}M14 14v12.500"/>` + quarterC,
  '<path d="M1.500 1.500h25v25h-25z" fill="url(#dark)"/><path d="M14 1.500h12.500V14H14z"/><path d="M14 14v12.500M1.500 14H14"/>', `<circle cx="14" cy="14" r="12.500" fill="url(#dark)" stroke="#222" stroke-width="1.500"/><path d="${half}${mid}" stroke="#222" stroke-width="1.300"/>`, sq + `<path d="${half}${mid}"/>` + quarterS, ci + `<path d="${half}${mid}"/>` + quarterC,
  '<path d="M.5 3.500h21v21H.5z"/>' + t('<tspan font-weight="bold">S</tspan>', 25, 27, 10), '<circle cx="11" cy="14" r="11"/>' + t('<tspan font-weight="bold">S</tspan>', 25, 27, 10), '<path d="M.5 3.500h21v21H.5z"/>' + t('<tspan font-weight="bold">L</tspan>', 25, 27, 10), '<circle cx="11" cy="14" r="11"/>' + t('<tspan font-weight="bold">L</tspan>', 25, 27, 10)
];
document.getElementById('library').innerHTML = items.map((s, i) =>
  `<button aria-label="符号 ${i + 1}"><svg class="block h-[28px] w-[28px] overflow-visible" viewBox="0 0 28 28" fill="#fafafa" stroke="#555" stroke-width=".9">${s}</svg></button>`).join('');

// Rulers: one labelled tick per ten units, one short tick between.
let h = '', v = '';
for (let i = 0; i < 27; i++) {
  const x = 12 + 22.4 * i;
  h += `<path d="M${x} 0v11M${x + 11.2} 6v5" stroke="#ccc"/><text x="${x + 2}" y="7" font-size="7" fill="#777">${20 + 10 * i}</text>`;
}
for (let i = 0; i < 19; i++) {
  const y = 14 + 22 * i;
  v += `<path d="M0 ${y}h12M7 ${y + 11}h5" stroke="#ccc"/><text transform="translate(8 ${y + (i < 8 ? 10 : 12)}) rotate(-90)" font-size="6" fill="#777">${20 + 10 * i}</text>`;
}
document.getElementById('hruler').innerHTML = h;
document.getElementById('vruler').innerHTML = v;

const colors = 'b90012 d90b20 c94c78 e95565 ec6b70 ee5ba0 e395b8 ee8a85 f2919b ffa07a f0a890 f6bfbb e9d3e9 fcd4e4 fde3e8 0c1f50 22386e 402e78 00498c 006aa8 3f63ae 5a88c8 0080cc 0091d0 2aa5df 00b0ee 35c6f7 88bfe9 a5d9ef cde9f5 004030 00552c 006464 5a7034 007e50 1f9a40 00ab98 50b8b8 1fccb0 45b97c 00ab50 82b718 a2cc60 bfd849 cfe8c8 e84e1b ee6a00 f48400 ef9850 fba200 fbae00 fdb638 fcc93a fddc00 ffee00 faf28a fdd26c e9cb9a fddcb0 fce9d5 762d74 87448f 683e98 7850a0 94619f 9b5585 cc7bb0 ad93d3 c3a3c9 e9bfd9 5a2a1c 70382a 9b4f2a a85628 c07a40 b5896f dfb98a cfcac6 c9d2cc 000000 3f393a 585858 707070 878787 9c9e9d b3b5b4 cdcfce dcdcdc ebebeb ffffff'.split(' ');
document.getElementById('palette').innerHTML = colors.map(c => `<button aria-label="#${c}" class="flex-1 border-r border-white/70" style="background:#${c}"></button>`).join('');
</script>
</body>
</html>
